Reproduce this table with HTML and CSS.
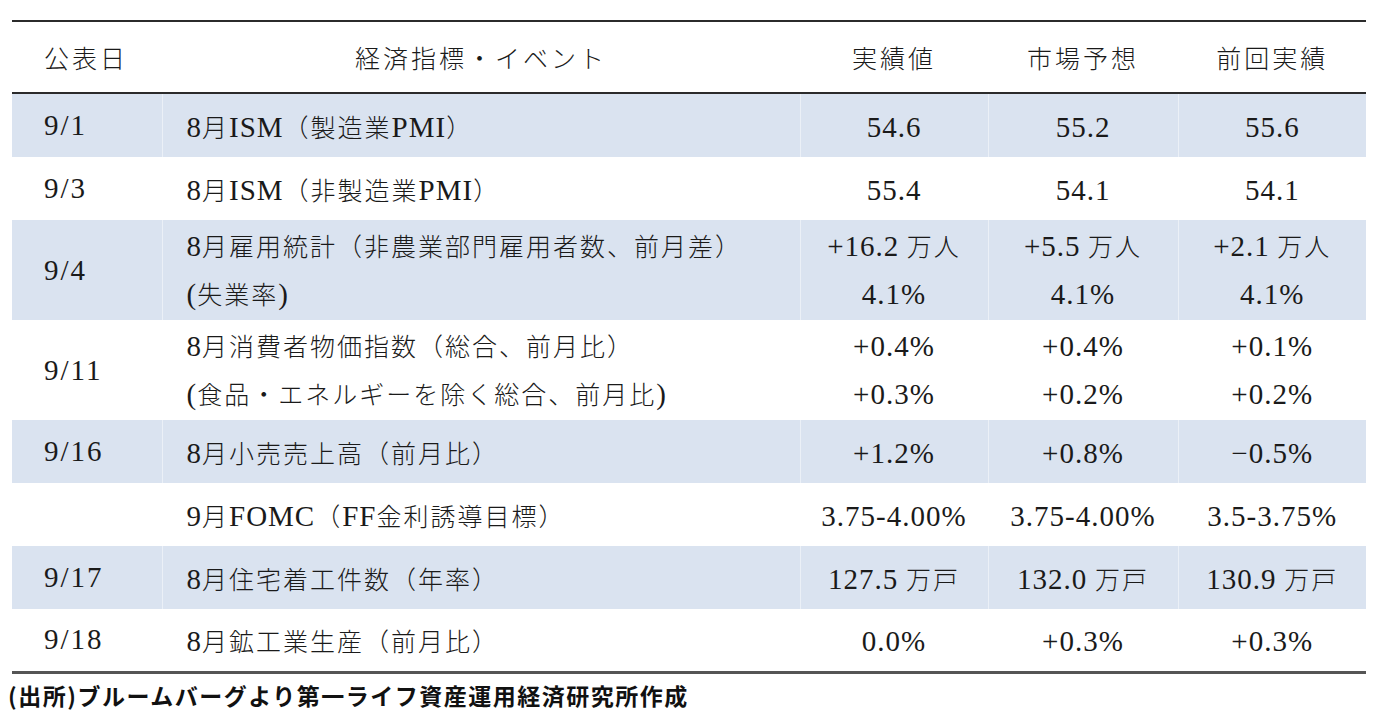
FILE: index.html
```html
<!DOCTYPE html>
<html lang="ja">
<head>
<meta charset="utf-8">
<title>経済指標</title>
<link rel="stylesheet" href="styles.css">
</head>
<body>
<div class="page">
  <table class="cal">
    <colgroup>
      <col class="c-date"><col class="c-event"><col class="c-val"><col class="c-val2"><col class="c-val">
    </colgroup>
    <thead>
      <tr class="head">
        <th class="date">公表日</th>
        <th class="event-h">経済指標・イベント</th>
        <th>実績値</th>
        <th>市場予想</th>
        <th>前回実績</th>
      </tr>
    </thead>
    <tbody>
      <tr class="r1 first blue">
        <td class="date n">9/1</td>
        <td class="event"><span class="n">8</span>月<span class="n">ISM</span>（製造業<span class="n">PMI</span>）</td>
        <td><span class="n">54.6</span></td><td><span class="n">55.2</span></td><td><span class="n">55.6</span></td>
      </tr>
      <tr class="r1">
        <td class="date n">9/3</td>
        <td class="event"><span class="n">8</span>月<span class="n">ISM</span>（非製造業<span class="n">PMI</span>）</td>
        <td><span class="n">55.4</span></td><td><span class="n">54.1</span></td><td><span class="n">54.1</span></td>
      </tr>
      <tr class="r2 blue">
        <td class="date n">9/4</td>
        <td class="event"><div><span class="n">8</span>月雇用統計（非農業部門雇用者数、前月差）</div><div><span class="n">(</span>失業率<span class="n">)</span></div></td>
        <td><div><span class="n">+16.2</span> 万人</div><div><span class="n">4.1%</span></div></td>
        <td><div><span class="n">+5.5</span> 万人</div><div><span class="n">4.1%</span></div></td>
        <td><div><span class="n">+2.1</span> 万人</div><div><span class="n">4.1%</span></div></td>
      </tr>
      <tr class="r2">
        <td class="date n">9/11</td>
        <td class="event"><div><span class="n">8</span>月消費者物価指数（総合、前月比）</div><div><span class="n">(</span>食品・エネルギーを除く総合、前月比<span class="n">)</span></div></td>
        <td><div><span class="n">+0.4%</span></div><div><span class="n">+0.3%</span></div></td>
        <td><div><span class="n">+0.4%</span></div><div><span class="n">+0.2%</span></div></td>
        <td><div><span class="n">+0.1%</span></div><div><span class="n">+0.2%</span></div></td>
      </tr>
      <tr class="r1 blue">
        <td class="date n">9/16</td>
        <td class="event"><span class="n">8</span>月小売売上高（前月比）</td>
        <td><span class="n">+1.2%</span></td><td><span class="n">+0.8%</span></td><td><span class="n">−0.5%</span></td>
      </tr>
      <tr class="r1">
        <td class="date n"></td>
        <td class="event"><span class="n">9</span>月<span class="n">FOMC</span>（<span class="n">FF</span>金利誘導目標）</td>
        <td><span class="n">3.75-4.00%</span></td><td><span class="n">3.75-4.00%</span></td><td><span class="n">3.5-3.75%</span></td>
      </tr>
      <tr class="r1 blue">
        <td class="date n">9/17</td>
        <td class="event"><span class="n">8</span>月住宅着工件数（年率）</td>
        <td><span class="n">127.5</span> 万戸</td><td><span class="n">132.0</span> 万戸</td><td><span class="n">130.9</span> 万戸</td>
      </tr>
      <tr class="r1">
        <td class="date n">9/18</td>
        <td class="event"><span class="n">8</span>月鉱工業生産（前月比）</td>
        <td><span class="n">0.0%</span></td><td><span class="n">+0.3%</span></td><td><span class="n">+0.3%</span></td>
      </tr>
    </tbody>
  </table>
  <p class="source">(出所)ブルームバーグより第一ライフ資産運用経済研究所作成</p>
</div>
</body>
</html>
```

FILE: styles.css
```css
html, body {
  margin: 0;
  padding: 0;
  background: #ffffff;
}

.page {
  padding: 20px 10px 0 12px;
}

.cal {
  width: 1354px;
  border-collapse: collapse;
  table-layout: fixed;
  font-family: "Noto Sans CJK JP", sans-serif;
  font-size: 25px;
  font-weight: 300;
  color: #1a1a1a;
  border-top: 2px solid #2b2b2b;
  border-bottom: 3px solid #555555;
}

.c-date { width: 150px; }
.c-event { width: 638px; }
.c-val { width: 188px; }
.c-val2 { width: 190px; }

.cal th,
.cal td {
  padding: 0;
  text-align: center;
  vertical-align: middle;
  font-weight: 300;
  letter-spacing: 2px;
  border-left: 1px solid rgba(255, 255, 255, 0.45);
}

.cal th:first-child,
.cal td:first-child {
  border-left: none;
}

.n {
  font-family: "Liberation Serif", serif;
  font-size: 29px;
  letter-spacing: 1px;
}

.cal .n {
  font-weight: 400;
}

.head {
  height: 72px;
  border-bottom: 2px solid #2b2b2b;
}

.head th {
  letter-spacing: 3px;
}

.cal .date {
  text-align: left;
  padding-left: 32px;
}

.cal .event {
  text-align: left;
  padding-left: 24px;
}

.r1 { height: 63px; }
.r1.first { height: 64px; }
.r2 { height: 100px; }

.r2 td div {
  line-height: 47px;
}

.blue td {
  background: #dae3f0;
}

.source {
  margin: 6px 0 0 -4px;
  font-family: "Noto Sans CJK JP", sans-serif;
  font-weight: 700;
  font-size: 23px;
  line-height: 30px;
  color: #111111;
  letter-spacing: 1.5px;
}
```
